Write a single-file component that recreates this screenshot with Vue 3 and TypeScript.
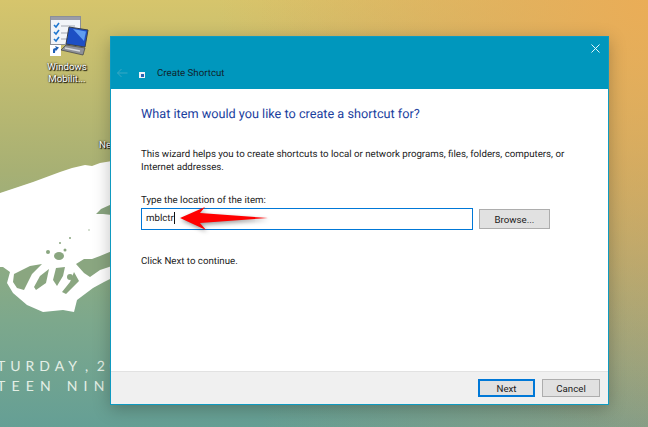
<template>
  <div class="desktop">
    <svg class="wallpaper" viewBox="0 0 648 427" width="648" height="427">
      <defs>
        <radialGradient id="warm" cx="648" cy="0" r="430" gradientUnits="userSpaceOnUse">
          <stop offset="0" stop-color="#eaad57" stop-opacity="1" />
          <stop offset="1" stop-color="#eaad57" stop-opacity="0" />
        </radialGradient>
        <linearGradient id="base" x1="0" y1="0" x2="0" y2="1">
          <stop offset="0" stop-color="#d6c56c" />
          <stop offset="0.4" stop-color="#a7b074" />
          <stop offset="0.75" stop-color="#7da88c" />
          <stop offset="1" stop-color="#659f95" />
        </linearGradient>
        <linearGradient id="side" x1="0" y1="0" x2="1" y2="0">
          <stop offset="0.4" stop-color="#c49a6a" stop-opacity="0" />
          <stop offset="1" stop-color="#c49a6a" stop-opacity="0.35" />
        </linearGradient>
      </defs>
      <rect width="648" height="427" fill="url(#base)" />
      <rect width="648" height="427" fill="url(#side)" />
      <rect width="648" height="427" fill="url(#warm)" />
      <path fill="#fff" d="M0 193 L33 182 L60 172 L72 168 L85 165 L92 166 L100 163 L112 161 V278 L104 282 L93 288 L77 300 L74 312 L63 310 L43 312 L27 305 L13 293 L7 283 L10 272 L3 267 L0 267 Z" />
      <g fill="#8aa680">
        <path d="M96 214 L101 209 L112 204 V215 L103 214 Z" />
        <path d="M14 274 L30 266 L42 264 L32 274 L24 290 L17 288 L13 282 Z" />
        <path d="M40 276 L49 269 L46 283 L36 290 L34 287 Z" />
        <path d="M76 264 L84 259 L92 259 L100 256 L112 251 V266 L100 270 L90 277 L84 273 Z" />
        <path d="M56 268 L65 267 L63 276 L57 286 L53 280 Z" />
        <path d="M74 272 L79 281 L66 294 L62 292 L70 282 Z" />
        <ellipse cx="59" cy="256" rx="5" ry="4" />
        <circle cx="48" cy="252" r="2" />
        <circle cx="65" cy="250" r="1.5" />
        <circle cx="60" cy="243" r="1" />
        <circle cx="70" cy="238" r="1" />
        <circle cx="89" cy="230" r="0.7" />
        <circle cx="70" cy="277" r="3" />
      </g>
    </svg>

    <div class="wall-text">
      <div class="line-one">TURDAY , 2019</div>
      <div class="line-two">TEEN NINE</div>
    </div>

    <div class="icon">
      <svg width="40" height="42" viewBox="0 0 40 42">
        <rect x="0.5" y="0.5" width="30" height="28" fill="#f2f4f8" stroke="#8b8f98" />
        <rect x="1" y="1" width="29" height="3" fill="#9a9ca8" />
        <path d="M4 9 l2 2 l3 -4 M4 16 l2 2 l3 -4 M4 23 l2 2 l3 -4" fill="none" stroke="#1f77d0" stroke-width="1.6" />
        <path d="M11 10 h14 M11 17 h8 M11 23 h7" stroke="#a4a8b2" stroke-width="1" />
        <path d="M19 11 L38 14 L35 31 L16 28 Z" fill="#1d4fc4" stroke="#3b4048" stroke-width="1" />
        <path d="M23 13 L36 15.5 L34 25 Z" fill="#5f9cf0" />
        <path d="M16 29 L35 32 L33 39 L11 34 Z" fill="#8e9198" stroke="#3e4147" stroke-width="0.7" />
        <path d="M15 32 L30 35" stroke="#d8dade" stroke-width="1.4" />
        <rect x="0" y="29" width="11" height="11" fill="#fff" />
        <path d="M3 37 V34 Q3 32 6 32 L5 30 L9 31.5 L6 35 L6 34 Q5 34 5 37 Z" fill="#1f5fb5" />
      </svg>
      <span>Windows<br />Mobilit...</span>
    </div>
    <div class="stray-label">Ne</div>

    <div class="dialog">
      <div class="title-bar">
        <svg class="close" width="9" height="9" viewBox="0 0 9 9">
          <path d="M0.5 0.5 L8.5 8.5 M8.5 0.5 L0.5 8.5" stroke="#e6f4f8" stroke-width="1" fill="none" />
        </svg>
        <svg class="back" width="12" height="10" viewBox="0 0 12 10">
          <path d="M11.5 5 H1.5 M5.5 1 L1.5 5 L5.5 9" stroke="#38a8c4" stroke-width="1" fill="none" />
        </svg>
        <span class="mini-icon"><i></i></span>
        <span class="title">Create Shortcut</span>
      </div>

      <div class="content">
        <h1>What item would you like to create a shortcut for?</h1>
        <p class="intro">This wizard helps you to create shortcuts to local or network programs, files, folders, computers, or Internet addresses.</p>
        <label>Type the location of the item:</label>
        <div class="location-row">
          <div class="location-input">mblctr<span class="caret"></span></div>
          <button class="btn browse">Browse...</button>
        </div>
        <p class="hint">Click Next to continue.</p>
      </div>

      <div class="footer">
        <button class="btn next">Next</button>
        <button class="btn cancel">Cancel</button>
      </div>
    </div>

    <svg class="arrow" width="92" height="28" viewBox="0 0 92 28">
      <path d="M0 13 L25 2 L20 8 L88 13 L20 18 L26 25 Z" fill="#f00" />
    </svg>
  </div>
</template>

<script setup lang="ts">
</script>

<style>
html, body {
  margin: 0;
  overflow: hidden;
}
</style>

<style scoped>
.desktop {
  position: relative;
  width: 648px;
  height: 427px;
  overflow: hidden;
  font-family: Roboto, "Open Sans", sans-serif;
  font-size: 9.7px;
  color: #1a1a1a;
  text-rendering: geometricPrecision;
}

.wallpaper {
  position: absolute;
  inset: 0;
  display: block;
}

.wall-text {
  position: absolute;
  left: -3px;
  top: 356px;
  color: #e4efe6;
  font-family: Lato, sans-serif;
  font-size: 14px;
  line-height: 19.5px;
  white-space: nowrap;
}

.line-one {
  letter-spacing: 5px;
  word-spacing: -5px;
}

.line-two {
  letter-spacing: 6.2px;
}

.icon {
  position: absolute;
  left: 40px;
  top: 16px;
  width: 54px;
  display: flex;
  flex-direction: column;
  align-items: center;
  color: #fff;
  line-height: 11.5px;
  text-align: center;
  text-shadow: 0 0 2px #000, 1px 1px 1px #000;
}

.icon svg {
  margin-left: 6px;
  margin-bottom: 4px;
  filter: blur(0.3px);
}

.stray-label {
  position: absolute;
  left: 99px;
  top: 139px;
  color: #fff;
  line-height: 13px;
  text-shadow: 0 0 2px #000, 1px 1px 1px #000;
}

.dialog {
  position: absolute;
  left: 110px;
  top: 36px;
  width: 499px;
  height: 369px;
  box-sizing: border-box;
  display: flex;
  flex-direction: column;
  border: 1px solid #0f9ac0;
  background: #fff;
  box-shadow: 0 4px 16px rgba(0, 0, 0, 0.25);
}

.title-bar {
  position: relative;
  height: 52px;
  flex-shrink: 0;
  box-sizing: border-box;
  display: flex;
  align-items: center;
  padding: 20px 0 0 5px;
  background: #0097bd;
  color: #10242c;
}

.close {
  position: absolute;
  right: 8px;
  top: 7px;
}

.mini-icon {
  display: block;
  width: 6px;
  height: 6px;
  margin: 4px 0 0 11px;
  background: #eef2f8;
}

.mini-icon i {
  display: block;
  width: 3px;
  height: 3px;
  margin: 2px 0 0 2px;
  background: #2a62b0;
}

.title {
  margin: 1px 0 0 12px;
}

.content {
  flex: 1;
  padding: 16px 30px 0;
}

h1 {
  margin: 0;
  color: #1a3e9e;
  font-size: 12.7px;
  font-weight: 400;
  line-height: 20px;
}

.intro {
  margin: 23px 0 0;
  width: 430px;
  line-height: 13px;
}

label {
  display: block;
  margin-top: 20px;
  line-height: 13px;
}

.location-row {
  display: flex;
  align-items: center;
  gap: 6px;
  margin-top: 1px;
}

.location-input {
  width: 332px;
  height: 22px;
  box-sizing: border-box;
  border: 1px solid #0078d7;
  padding-left: 4px;
  line-height: 20px;
  background: #fff;
}

.caret {
  display: inline-block;
  width: 1px;
  height: 12px;
  background: #111;
  vertical-align: -3px;
}

.btn {
  box-sizing: border-box;
  height: 18px;
  padding: 0;
  border: 1px solid #adadad;
  background: #e1e1e1;
  font: inherit;
  color: #1a1a1a;
}

.browse {
  width: 71px;
  height: 20px;
}

.hint {
  margin: 25px 0 0;
  line-height: 13px;
}

.footer {
  height: 33px;
  flex-shrink: 0;
  box-sizing: border-box;
  display: flex;
  align-items: center;
  justify-content: flex-end;
  gap: 7px;
  padding-right: 8px;
  background: #f0f0f0;
  border-top: 1px solid #e2e2e2;
}

.next {
  width: 57px;
  border: 2px solid #0078d7;
}

.cancel {
  width: 58px;
}

.arrow {
  position: absolute;
  left: 180px;
  top: 205px;
  filter: drop-shadow(1px 2px 2px rgba(0, 0, 0, 0.4));
}
</style>
